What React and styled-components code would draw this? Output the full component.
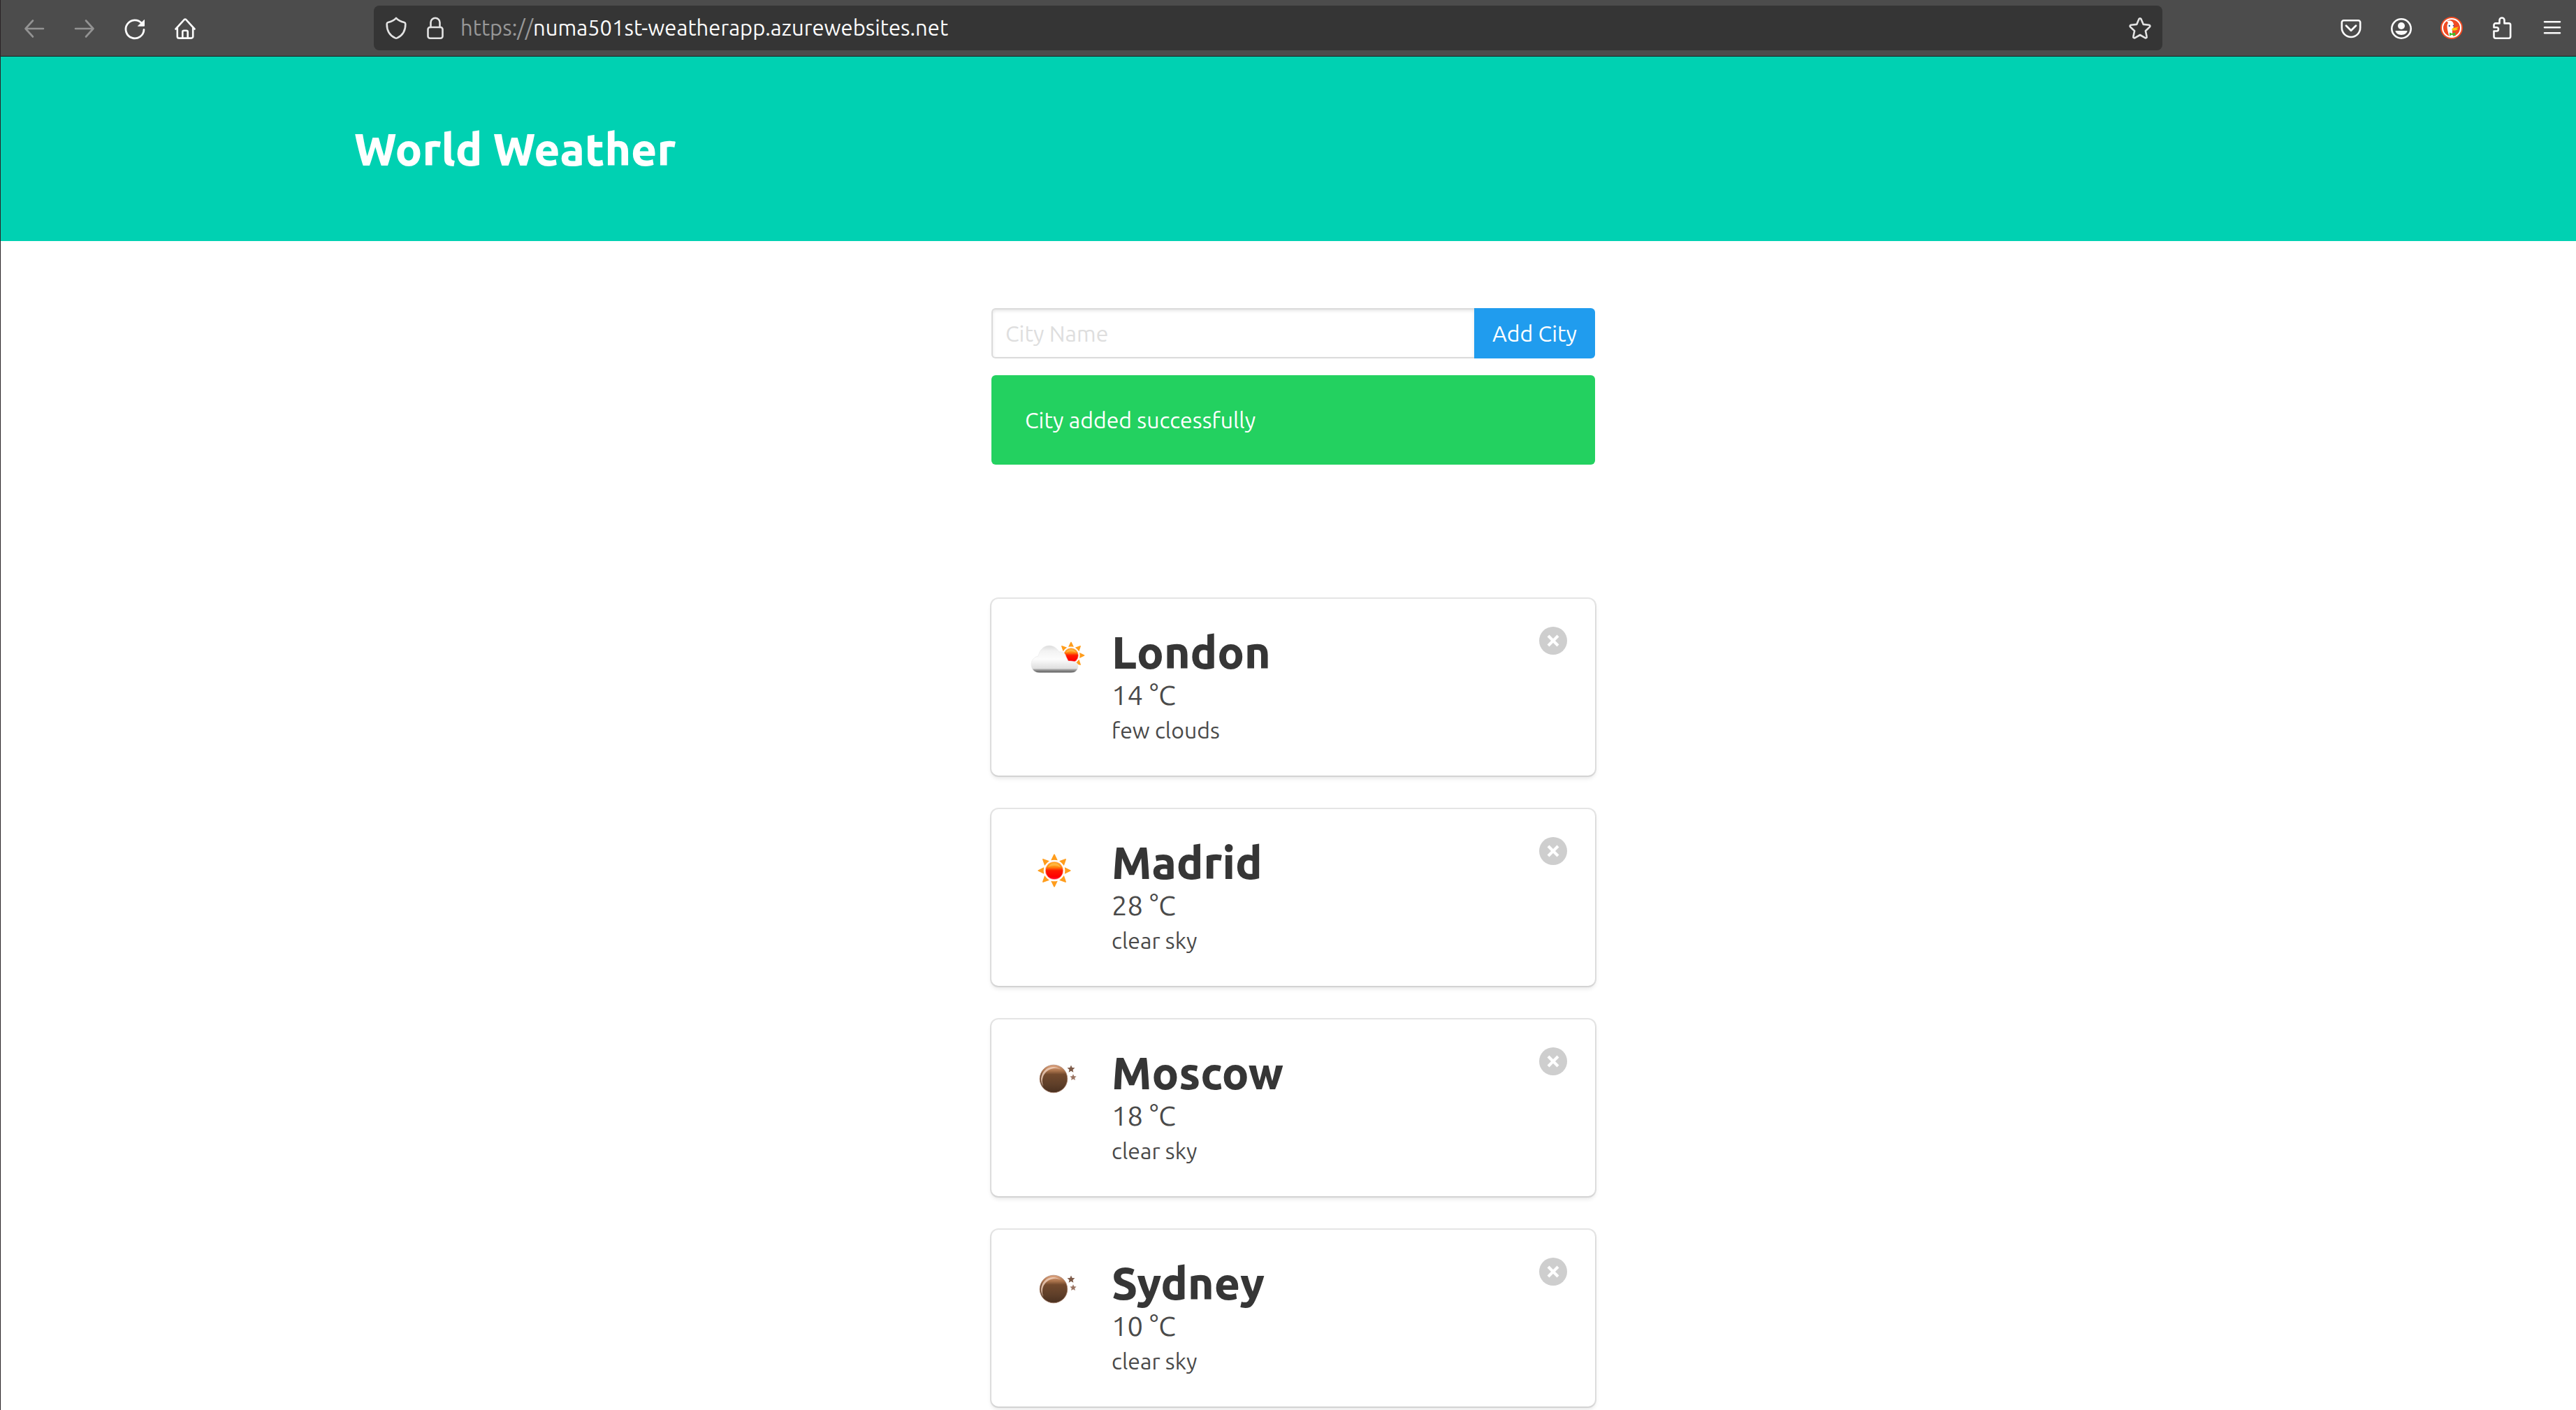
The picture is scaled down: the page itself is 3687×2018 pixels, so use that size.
import React, { useState } from 'react';
import styled, { createGlobalStyle } from 'styled-components';

const GlobalStyle = createGlobalStyle`
  *, *::before, *::after { box-sizing: border-box; }
  body {
    margin: 0;
    background: #fff;
    color: #4a4a4a;
    font-family: Ubuntu, "Noto Sans", sans-serif;
    font-size: 32px;
    font-weight: 450;
    line-height: 48px;
  }
  h1, h2, p, ul { margin: 0; padding: 0; }
  button, input { font: inherit; }
`;

const Window = styled.div`
  min-height: 100vh;
  border-left: 1px solid #2a2427;
`;

/* Browser toolbar */

const Toolbar = styled.div`
  display: flex;
  align-items: center;
  height: 81px;
  padding: 0 2px 0 16px;
  background: #4c4c4c;
  border-bottom: 1px solid #1c1c1c;
`;

const ToolGroup = styled.div`
  display: flex;
  gap: 8px;
`;

const ToolButton = styled.button`
  display: flex;
  align-items: center;
  justify-content: center;
  width: ${(p) => (p.$compact ? 48 : 64)}px;
  height: 64px;
  flex-shrink: 0;
  padding: 0;
  border: 0;
  border-radius: 8px;
  background: none;
  color: ${(p) => (p.$compact ? '#e3e3e3' : '#fbfbfb')};

  &:disabled { color: #939393; }
`;

const AddressBar = styled.div`
  display: flex;
  align-items: center;
  gap: 8px;
  flex: 1;
  min-width: 0;
  height: 64px;
  margin: 0 238px;
  padding: 0 8px;
  border-radius: 8px;
  background: #353535;
`;

const Address = styled.div`
  flex: 1;
  min-width: 0;
  padding-left: 4px;
  overflow: hidden;
  white-space: nowrap;
  font-size: 31px;
  font-weight: 400;
  color: #fbfbfb;
  outline: 0;
`;

const Scheme = styled.span`
  color: #989898;
`;

const Icon = styled.svg`
  display: block;
  width: ${(p) => p.$size || 32}px;
  height: ${(p) => p.$size || 32}px;
  flex-shrink: 0;
  overflow: visible;
`;

/* Page */

const Hero = styled.header`
  padding: 96px 0 96px 14px;
  background: #00d1b2;
`;

const Section = styled.section`
  padding: 96px 0 0 14px;
`;

const Container = styled.div`
  max-width: 2688px;
  margin: 0 auto;
`;

const Column = styled.div`
  max-width: 864px;
  margin: 0 auto;
`;

const Title = styled.h1`
  font-size: 64px;
  font-weight: 800;
  line-height: 72px;
  color: #fff;
`;

const Form = styled.form`
  display: flex;
  height: 72px;
  margin-bottom: 24px;
`;

const CityInput = styled.input`
  flex: 1;
  min-width: 0;
  padding: 0 18px;
  border: 2px solid #dbdbdb;
  border-right: 0;
  border-radius: 6px 0 0 6px;
  background: #fff;
  box-shadow: inset 0 2px 4px rgba(10, 10, 10, 0.1);
  color: #363636;
  outline: 0;

  &::placeholder { color: #dedede; opacity: 1; }
`;

const AddButton = styled.button`
  padding: 0 26px;
  border: 0;
  border-radius: 0 6px 6px 0;
  background: #209cee;
  color: #fff;
  white-space: nowrap;
`;

const Notification = styled.p`
  padding: 40px 48px;
  border-radius: 6px;
  background: #23d160;
  color: #fff;
`;

const CityList = styled.ul`
  display: flex;
  flex-direction: column;
  gap: 48px;
  padding-top: 96px;
  list-style: none;
`;

const Card = styled.li`
  display: flex;
  align-items: flex-start;
  padding: 40px;
  border-radius: 10px;
  background: #fff;
  box-shadow: 0 4px 6px rgba(10, 10, 10, 0.1), 0 0 0 2px rgba(10, 10, 10, 0.1);
`;

const CardBody = styled.div`
  flex: 1;
  min-width: 0;
  margin-left: 32px;
`;

const CityName = styled.h2`
  font-size: 64px;
  font-weight: 800;
  line-height: 72px;
  color: #363636;
`;

const Temperature = styled.p`
  font-size: 40px;
  line-height: 51px;
`;

const Description = styled.p`
  line-height: 50px;
`;

const DeleteButton = styled.button`
  width: 40px;
  height: 40px;
  flex-shrink: 0;
  padding: 0;
  border: 0;
  border-radius: 50%;
  background: #cecece;
  color: #fff;
`;

const line = {
  fill: 'none',
  stroke: 'currentColor',
  strokeWidth: 2.6,
  strokeLinecap: 'round',
  strokeLinejoin: 'round',
};

const BackIcon = () => (
  <Icon viewBox="0 0 32 32" {...line}>
    <path d="M29 17H3.500M14 5.500 3.500 17 14 28.500" />
  </Icon>
);

const ForwardIcon = () => (
  <Icon viewBox="0 0 32 32" {...line}>
    <path d="M3 17h25.500M18 5.500 28.500 17 18 28.500" />
  </Icon>
);

const ReloadIcon = () => (
  <Icon viewBox="0 0 32 32" {...line}>
    <path d="M29 18.500A13 13 0 1 1 26 9.500" strokeWidth="2.800" />
    <path d="M29.500 4.800v8.400h-8.700z" fill="currentColor" stroke="currentColor" strokeWidth="1" />
  </Icon>
);

const HomeIcon = () => (
  <Icon viewBox="0 0 32 32" {...line}>
    <path d="M2.500 17.500 14.700 4.200a1.800 1.800 0 0 1 2.600 0L29.500 17.500" />
    <path d="M4.800 16v12.200a2.400 2.400 0 0 0 2.400 2.400h17.600a2.400 2.400 0 0 0 2.400-2.400V16" />
    <path d="M12.300 30.500v-8.800a2 2 0 0 1 2-2h3.400a2 2 0 0 1 2 2v8.800" />
  </Icon>
);

const ShieldIcon = () => (
  <Icon viewBox="0 0 32 32" {...line}>
    <path d="M16 1.800c-2.800 3-7.400 5.200-11.500 6.200-1 .3-1.800 1.100-1.800 2.200C2.500 19.500 6.500 26.500 14.600 30.400a3.200 3.200 0 0 0 2.800 0C25.500 26.500 29.500 19.500 29.300 10.200c0-1.100-.8-1.900-1.800-2.200C23.400 7 18.800 4.800 16 1.800z" />
  </Icon>
);

const LockIcon = () => (
  <Icon viewBox="0 0 32 32" {...line}>
    <rect x="5.500" y="15" width="21" height="15.700" rx="3" />
    <path d="M9.500 15V8.300a6.500 6.500 0 0 1 13 0V15" />
  </Icon>
);

const StarIcon = () => (
  <Icon viewBox="0 0 32 32" {...line}>
    <path d="M14.500 3.200a1.700 1.700 0 0 1 3 0l3.300 7.700 8.100.9a1.600 1.600 0 0 1 .9 2.800l-5.900 5.600 1.700 8.100a1.600 1.600 0 0 1-2.400 1.800L16 26l-7.200 4.100a1.600 1.600 0 0 1-2.400-1.800l1.700-8.100-5.900-5.600a1.600 1.600 0 0 1 .9-2.800l8.100-.9z" />
  </Icon>
);

const PocketIcon = () => (
  <Icon viewBox="0 0 32 32" {...line}>
    <path d="M5.500 5.300h21a2.700 2.700 0 0 1 2.700 2.700v7.800a13.200 13.200 0 0 1-26.400 0V8a2.700 2.700 0 0 1 2.700-2.700z" />
    <path d="m9 12.800 7 7 7-7" strokeWidth="2.800" />
  </Icon>
);

const AccountIcon = () => (
  <Icon viewBox="0 0 32 32" {...line}>
    <circle cx="16" cy="17" r="13.700" />
    <circle cx="16" cy="13" r="5" fill="currentColor" stroke="none" />
    <path d="M7.500 20h17c0 3.200-4 6-8.500 6s-8.500-2.800-8.500-6z" fill="currentColor" stroke="none" />
  </Icon>
);

const DuckIcon = () => (
  <Icon viewBox="0 0 32 32">
    <circle cx="16" cy="16" r="16" fill="#f04b23" />
    <circle cx="16" cy="16" r="13" fill="none" stroke="#fff" strokeWidth="2" />
    <path d="M12.500 28C11.500 23.500 9.300 18 9.500 13.500c.1-2.800.7-4 1.600-4.800L9 6.200c3.500-1.300 6-.8 7.800.6 2 1.500 2.500 4.500 2.300 7.200L17 19c-.3 3.200.2 6.200 1 9z" fill="#fff" />
    <circle cx="12.800" cy="13" r="1.200" fill="#2b5a92" />
    <circle cx="18.600" cy="12.800" r="1" fill="#2b5a92" />
    <path d="M16.500 17c1.500-1.600 5-1 9.300-2.800-.3 1.700-2.500 2.300-3.300 2.900 1 .2 2 .1 2.600 0-1 2.500-4.600 2.900-8 2.500-.8-.5-1-1.700-.6-2.600z" fill="#fdc90c" />
    <path d="m13 22.500 3.500 1.500 4.800-1.500v5L16.500 25.800 13 27.500z" fill="#3cbf2e" />
  </Icon>
);

const PuzzleIcon = () => (
  <Icon viewBox="0 0 32 32" {...line}>
    <path d="M4.500 20.500v7.800a2.400 2.400 0 0 0 2.400 2.400h18.900a2.400 2.400 0 0 0 2.400-2.400V11.800a2.400 2.400 0 0 0-2.400-2.400h-6.300V5a3.500 3.500 0 0 0-7 0v4.400H6.900a2.400 2.400 0 0 0-2.400 2.400v3.400h3.800a2.600 2.600 0 0 1 0 5.300z" />
  </Icon>
);

const MenuIcon = () => (
  <Icon viewBox="0 0 32 32" {...line}>
    <path d="M5 7.300h22M5 15.300h22M5 23.300h22" />
  </Icon>
);

const CrossIcon = () => (
  <Icon viewBox="0 0 40 40" $size={40}>
    <path d="M13 13 27 27M27 13 13 27" stroke="currentColor" strokeWidth="4.200" />
  </Icon>
);

/* Weather drawings on a 100 x 100 tile */

const rays = [0, 45, 90, 135, 180, 225, 270, 315];

const SunShape = ({ x, y, scale }) => (
  <g transform={`translate(${x} ${y}) scale(${scale})`}>
    {rays.map((angle) => (
      <path key={angle} d="M-4.800-14.800Q0-15.800 4.800-14.800L.6-23.500h-1.200z" fill="#ff9d1c" transform={`rotate(${angle})`} />
    ))}
    <circle r="12.800" fill="url(#sunFill)" stroke="#ffc9b0" strokeWidth="0.800" />
    <path d="M-9-5a10 10 0 0 1 18 0Q0-9-9-5z" fill="#ffd166" opacity="0.500" />
  </g>
);

const Gradient = ({ id, stops }) => (
  <linearGradient id={id} x1="0" y1="0" x2="0" y2="1">
    {stops.map(([offset, color]) => (
      <stop key={offset} offset={offset} stopColor={color} />
    ))}
  </linearGradient>
);

const sunStops = [[0, '#ffa51e'], [0.3, '#ff8a10'], [0.5, '#ff1a00'], [0.85, '#ff0000'], [1, '#ff1450']];

const ClearDay = () => (
  <Icon viewBox="0 0 100 100" $size={100}>
    <defs><Gradient id="sunFill" stops={sunStops} /></defs>
    <SunShape x={50} y={48} scale={1} />
  </Icon>
);

const FewClouds = () => (
  <Icon viewBox="0 0 100 100" $size={100}>
    <defs>
      <Gradient id="sunFill" stops={sunStops} />
      <Gradient id="cloudFill" stops={[[0, '#dcdcdc'], [0.2, '#f3f3f3'], [0.5, '#fcfcfc'], [0.84, '#dfdfdf'], [0.88, '#a5a5a5'], [0.96, '#6c6c6c'], [1, '#a0a0a0']]} />
    </defs>
    <SunShape x={74} y={41} scale={0.82} />
    <path
      d="M29 66c-7 0-12-5-12-12 0-6 4-11 10-12 2-9 8-15 16-15 6 0 11 4 14 9 5-1 9 2 10 7l3 6c8 0 14 1 14 7 0 6-4 10-10 10z"
      fill="url(#cloudFill)"
      stroke="#e6e6e6"
      strokeWidth="0.500"
    />
  </Icon>
);

const starPath = 'M0-5.500 1.600-2 5.500-1.700 2.500.9 3.400 4.800 0 2.700-3.400 4.800-2.500.9-5.500-1.700-1.600-2z';

const ClearNight = () => (
  <Icon viewBox="0 0 100 100" $size={100}>
    <defs><Gradient id="moonFill" stops={[[0, '#e3a680'], [0.22, '#a8714a'], [0.34, '#734a2e'], [0.7, '#5f3f29'], [1, '#4a3020']]} /></defs>
    <circle cx="49" cy="45" r="19.800" fill="url(#moonFill)" stroke="#a9826c" strokeWidth="0.800" />
    <path d="M34.500 56A17.500 17.500 0 0 1 59 31.500A18.500 18.500 0 0 0 34.500 56z" fill="#f3d3c0" opacity="0.800" />
    <path d={starPath} fill="#7d5a48" transform="translate(74 31)" />
    <path d={starPath} fill="#9a7462" transform="translate(77 43) scale(0.850)" />
  </Icon>
);

const initialCities = [
  { name: 'London', temperature: 14, description: 'few clouds', Picture: FewClouds },
  { name: 'Madrid', temperature: 28, description: 'clear sky', Picture: ClearDay },
  { name: 'Moscow', temperature: 18, description: 'clear sky', Picture: ClearNight },
  { name: 'Sydney', temperature: 10, description: 'clear sky', Picture: ClearNight },
];

const CityCard = ({ city, onDelete }) => (
  <Card>
    <city.Picture />
    <CardBody>
      <CityName>{city.name}</CityName>
      <Temperature>{city.temperature} °C</Temperature>
      <Description>{city.description}</Description>
    </CardBody>
    <DeleteButton type="button" aria-label={`Delete ${city.name}`} onClick={onDelete}>
      <CrossIcon />
    </DeleteButton>
  </Card>
);

export default function App() {
  const [cities, setCities] = useState(initialCities);

  return (
    <Window>
      <GlobalStyle />
      <Toolbar>
        <ToolGroup>
          <ToolButton aria-label="Back" disabled><BackIcon /></ToolButton>
          <ToolButton aria-label="Forward" disabled><ForwardIcon /></ToolButton>
          <ToolButton aria-label="Reload"><ReloadIcon /></ToolButton>
          <ToolButton aria-label="Home"><HomeIcon /></ToolButton>
        </ToolGroup>
        <AddressBar>
          <ToolButton $compact aria-label="Tracking protection"><ShieldIcon /></ToolButton>
          <ToolButton $compact aria-label="Site security"><LockIcon /></ToolButton>
          <Address role="textbox" aria-label="Address" contentEditable suppressContentEditableWarning spellCheck={false}>
            <Scheme>https://</Scheme>numa501st-weatherapp.azurewebsites.net
          </Address>
          <ToolButton $compact aria-label="Bookmark"><StarIcon /></ToolButton>
        </AddressBar>
        <ToolGroup>
          <ToolButton aria-label="Save to Pocket"><PocketIcon /></ToolButton>
          <ToolButton aria-label="Account"><AccountIcon /></ToolButton>
          <ToolButton aria-label="DuckDuckGo"><DuckIcon /></ToolButton>
          <ToolButton aria-label="Extensions"><PuzzleIcon /></ToolButton>
          <ToolButton aria-label="Menu"><MenuIcon /></ToolButton>
        </ToolGroup>
      </Toolbar>

      <Hero>
        <Container>
          <Title>World Weather</Title>
        </Container>
      </Hero>

      <main>
        <Section>
          <Container>
            <Column>
              <Form onSubmit={(e) => e.preventDefault()}>
                <CityInput type="text" name="city" placeholder="City Name" aria-label="City Name" />
                <AddButton type="submit">Add City</AddButton>
              </Form>
              <Notification role="status">City added successfully</Notification>
            </Column>
          </Container>
        </Section>
        <Section>
          <Container>
            <Column>
              <CityList>
                {cities.map((city) => (
                  <CityCard
                    key={city.name}
                    city={city}
                    onDelete={() => setCities(cities.filter((c) => c !== city))}
                  />
                ))}
              </CityList>
            </Column>
          </Container>
        </Section>
      </main>
    </Window>
  );
}
